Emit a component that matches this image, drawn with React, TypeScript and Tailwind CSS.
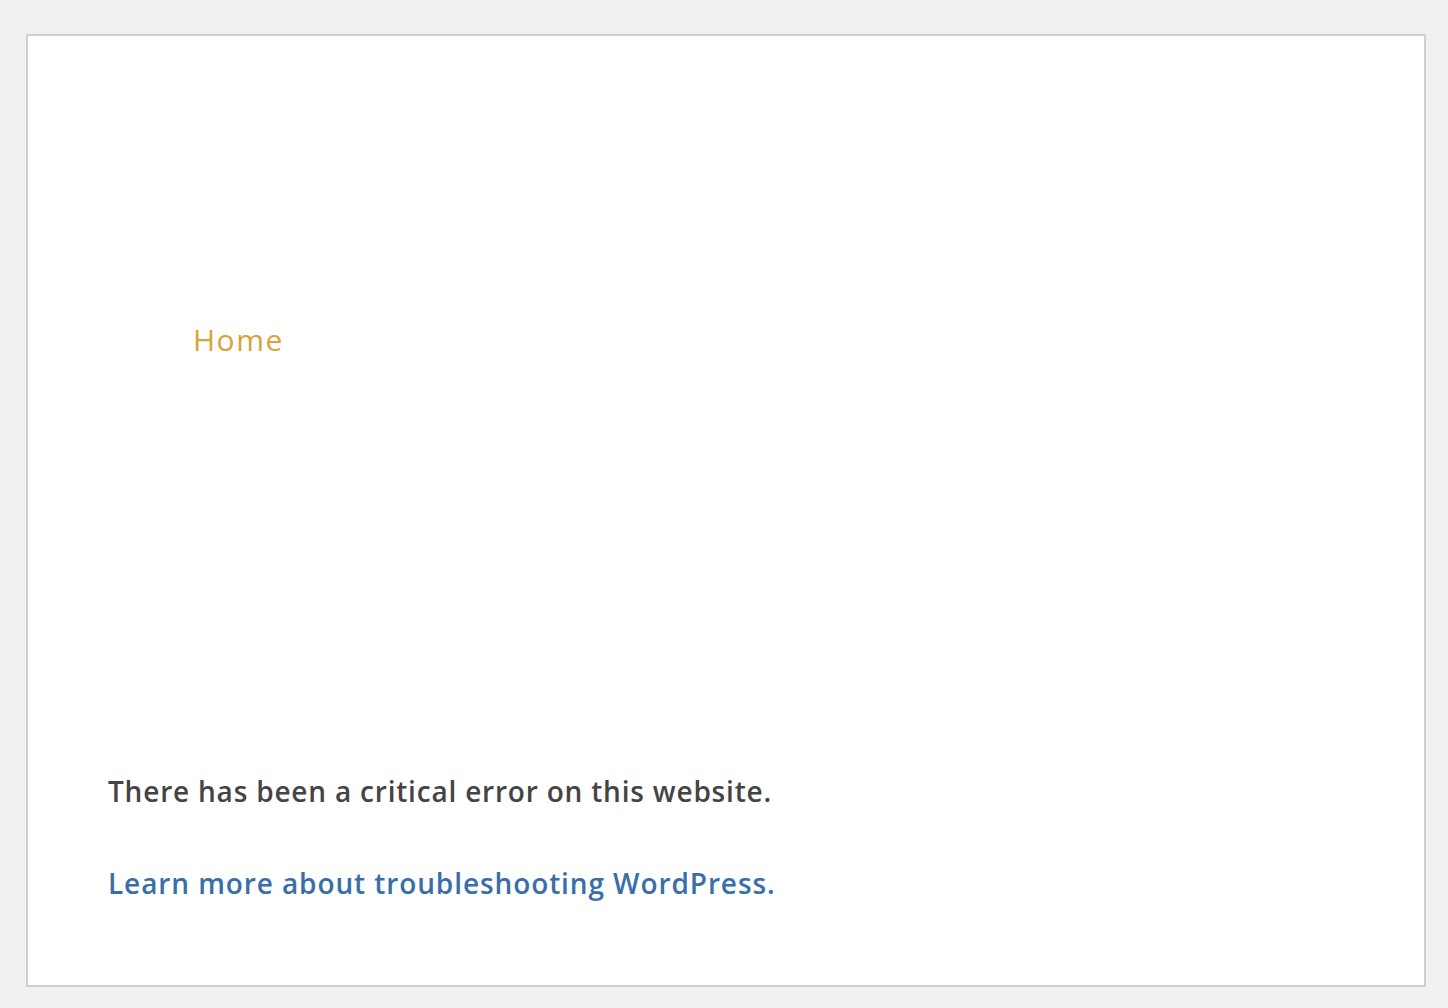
export default function App() {
  return (
    <div className="min-h-[1008px] bg-[#f1f1f1] pt-[34px] pl-[26px]">
      <div className="flex h-[953px] w-[1400px] flex-col border-2 border-[#ccd0d4] bg-white px-[80px] font-['Open_Sans',sans-serif]">
        <div className="mt-[283px] pl-[85px] text-[30px] leading-[42px] tracking-[1.5px] text-[#d9a33a]">Home</div>
        <div className="flex-1" />
        <p className="text-[28px] font-semibold leading-[40px] tracking-[0.8px] text-[#444]">
          There has been a critical error on this website.
        </p>
        <p className="mt-[52px] mb-[82px] text-[28px] font-semibold leading-[40px] tracking-[0.9px]">
          <a href="#" className="text-[#3a6ea8]">
            Learn more about troubleshooting WordPress.
          </a>
        </p>
      </div>
    </div>
  );
}
